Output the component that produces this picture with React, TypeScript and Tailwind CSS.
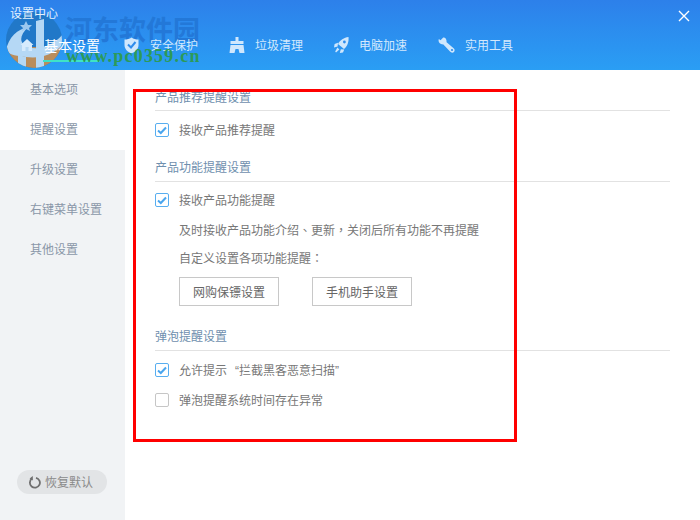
import React from "react";

const fontCls = "font-['Noto_Sans_CJK_SC','Noto_Sans',sans-serif]";
const twCls = "font-['Noto_Sans_CJK_TC',sans-serif]";
const latinCls = "font-['Liberation_Sans',sans-serif]";

const HomeIcon = () => (
  <svg width="14" height="14" viewBox="0 0 14 14" fill="#d6ebfd">
    <path d="M7 1 L13.5 7 L12 7 L12 13 L8.5 13 L8.5 9 L5.5 9 L5.5 13 L2 13 L2 7 L0.5 7 Z" />
  </svg>
);

const ShieldIcon = () => (
  <svg width="15" height="17" viewBox="0 0 15 17">
    <path d="M7.5 0.5 C9.5 2 12 2.6 14.5 2.6 L14.5 8 C14.5 12 11.5 15 7.5 16.5 C3.5 15 0.5 12 0.5 8 L0.5 2.6 C3 2.6 5.5 2 7.5 0.5 Z" fill="#cfe7fd" />
    <path d="M4 7.5 L7 10.5 L11.5 5" fill="none" stroke="#2f8cec" strokeWidth="2" />
  </svg>
);

const BroomIcon = () => (
  <svg width="16" height="16" viewBox="0 0 16 16" fill="#cfe7fd">
    <rect x="6.5" y="0" width="3" height="4" />
    <rect x="1.5" y="4" width="13" height="3" />
    <path d="M1.5 8 L14.5 8 L15.5 16 L10.5 16 L9.5 12 L6.5 12 L5.5 16 L0.5 16 Z" />
  </svg>
);

const RocketIcon = () => (
  <svg width="15" height="16" viewBox="0 0 15 16">
    <path d="M14.5 0 C15 5 13.2 9.5 10 12 L4 7 C6 3 10 0.5 14.5 0 Z" fill="#cfe7fd" />
    <path d="M4 5.8 L0.6 7 L0 10.4 L3.6 9.4 Z" fill="#cfe7fd" />
    <path d="M10.2 12.6 L9 15.4 L5.8 16 L6.8 12.2 Z" fill="#cfe7fd" />
    <path d="M3.4 10.6 L5.4 12.4 L2 15.4 L1.2 14.6 Z" fill="#cfe7fd" />
    <circle cx="10.4" cy="5" r="1.4" fill="#2f8cec" />
  </svg>
);

const WrenchIcon = () => (
  <svg width="17" height="16" viewBox="0 0 17 16">
    <path d="M5.2 0.6 L2.6 3.2 L0.8 2 C0 4.4 1 6.8 3.8 7.2 L5.4 7.4 L12 14.6 C13 15.8 14.8 16 16 15 C17 13.8 16.8 12.2 15.6 11.2 L8.6 5.2 C8.8 2.2 7.4 0.4 5.2 0.6 Z" fill="#cfe7fd" />
    <circle cx="14" cy="13" r="1.1" fill="#2f8cec" />
  </svg>
);

const navItems = [
  { label: "基本设置", icon: <HomeIcon />, cls: "w-[104px]", iconCls: "w-[24px]", textCls: "text-[14px] text-white", active: true },
  { label: "安全保护", icon: <ShieldIcon />, cls: "w-[105px]", iconCls: "w-[26px]", textCls: "text-[12px] text-[#d3e9fd]", active: false },
  { label: "垃圾清理", icon: <BroomIcon />, cls: "w-[105px]", iconCls: "w-[26px]", textCls: "text-[12px] text-[#d3e9fd]", active: false },
  { label: "电脑加速", icon: <RocketIcon />, cls: "w-[104px]", iconCls: "w-[25px]", textCls: "text-[12px] text-[#d3e9fd]", active: false },
  { label: "实用工具", icon: <WrenchIcon />, cls: "w-[105px]", iconCls: "w-[27px]", textCls: "text-[12px] text-[#d3e9fd]", active: false },
];

const sideItems = ["基本选项", "提醒设置", "升级设置", "右键菜单设置", "其他设置"];

const Check = ({ checked }: { checked: boolean }) => (
  <span
    className={
      checked
        ? "flex h-[14px] w-[14px] items-center justify-center rounded-[2px] border border-[#58aef0] bg-white"
        : "flex h-[14px] w-[14px] items-center justify-center rounded-[2px] border border-[#c6c6c6] bg-white"
    }
  >
    {checked && (
      <svg width="10" height="9" viewBox="0 0 10 9">
        <path d="M1 4.5 L3.8 7 L9 1.5" fill="none" stroke="#4aa5ee" strokeWidth="2" />
      </svg>
    )}
  </span>
);

const Row = ({ checked, children }: { checked: boolean; children: React.ReactNode }) => (
  <div className="flex h-[30px] items-center gap-[10px] text-[12px] text-[#777]">
    <Check checked={checked} />
    <span>{children}</span>
  </div>
);

const Heading = ({ text, cls }: { text: string; cls: string }) => (
  <div className={`flex h-[28px] w-[515px] items-center border-b border-[#e2e2e2] text-[12px] text-[#6f8fae] ${cls}`}>
    {text}
  </div>
);

const Watermark = () => (
  <div className="absolute left-[4px] top-[11px] flex">
    <svg width="60" height="58" viewBox="0 0 60 58">
      <defs>
        <clipPath id="logo">
          <circle cx="30" cy="29" r="28" />
        </clipPath>
      </defs>
      <g clipPath="url(#logo)">
        <rect width="60" height="58" fill="#2178c8" />
        <rect y="36" width="60" height="22" fill="#b98d5c" />
        <path d="M2 40 C4 26 14 18 24 16 C16 24 14 32 24 36 C36 40 50 34 60 22 L60 32 C50 44 36 48 22 46 C14 45 6 44 2 40 Z" fill="#b5d8f5" />
        <path d="M32 10 L40 8 L40 58 L32 58 Z" fill="#b5d8f5" />
        <path d="M14 44 L22 46 L22 58 L14 58 Z" fill="#b5d8f5" />
        <path d="M22 10 L24 14 L28 14 L25 17 L26 20 L22 18 L18 20 L19 17 L16 14 L20 14 Z" fill="#9cc8ef" />
      </g>
    </svg>
  </div>
);

export default function App() {
  return (
    <div className={`relative flex h-[520px] w-[700px] flex-col overflow-hidden bg-white ${fontCls}`}>
      <header className="relative h-[70px] bg-gradient-to-b from-[#2d80ea] to-[#2a9ef4]">
        <Watermark />
        <div className="absolute left-[65px] top-[14px] font-['Liberation_Serif','Noto_Sans_CJK_SC',serif] text-[27px] font-bold leading-[34px] text-[#2378d8]">
          河东软件园
        </div>
        <div className="relative flex h-[70px] flex-col">
          <div className="pl-[10px] pt-[6px] text-[12px] leading-[14px] text-[#e4f1fd]">设置中心</div>
          <nav className="mt-[15px] flex pl-[20px]">
            {navItems.map((n) => (
              <div key={n.label} className={`flex h-[20px] items-center ${n.cls}`}>
                <span className={`flex items-center ${n.iconCls}`}>{n.icon}</span>
                <span className={`relative leading-[20px] ${n.textCls}`}>
                  {n.label}
                  {n.active && <span className="absolute left-[-1px] top-[25px] h-[2px] w-[57px] bg-[#3fe3c6]" />}
                </span>
              </div>
            ))}
          </nav>
        </div>
        <div className="absolute left-[66px] top-[46px] font-['Liberation_Serif',serif] text-[18px] font-bold leading-[20px] tracking-[1.2px] text-[#2c9a58]">
          www.pc0359.cn
        </div>
        <svg className="absolute left-[678px] top-[10px]" width="12" height="12" viewBox="0 0 12 12">
          <path d="M1 1 L11 11 M11 1 L1 11" stroke="#fff" strokeWidth="1.4" />
        </svg>
      </header>

      <div className="flex flex-1">
        <aside className="flex w-[125px] flex-col bg-[#f1f3f5]">
          {sideItems.map((s) => (
            <div
              key={s}
              className={
                s === "提醒设置"
                  ? "flex h-[40px] items-center bg-white pb-[2px] pl-[30px] text-[12px] text-[#8a97a8]"
                  : "flex h-[40px] items-center pb-[2px] pl-[30px] text-[12px] text-[#8a97a8]"
              }
            >
              {s}
            </div>
          ))}
          <div className="mt-auto pb-[26px] pl-[17px]">
            <div className="flex h-[24px] w-[90px] items-center rounded-full bg-[#e2e4e6] pl-[11px] text-[12px] text-[#8a8a8a]">
              <svg width="13" height="13" viewBox="0 0 13 13" className="mr-[4px]">
                <path d="M4 2.6 A5 5 0 1 0 8 1.8" fill="none" stroke="#6f6f6f" strokeWidth="1.8" />
                <path d="M4.8 0 L4.8 4.4 L1.6 2.4 Z" fill="#6f6f6f" />
              </svg>
              恢复默认
            </div>
          </div>
        </aside>

        <main className="flex flex-col pl-[30px] pt-[13px]">
          <Heading text="产品推荐提醒设置" cls="" />
          <div className="mt-[4px]">
            <Row checked>接收产品推荐提醒</Row>
          </div>
          <Heading text="产品功能提醒设置" cls="mt-[9px] pb-[2px]" />
          <div className="mt-[3px]">
            <Row checked>接收产品功能提醒</Row>
          </div>
          <div className="pl-[24px] text-[12px] text-[#777]">
            <div className="flex h-[30px] items-center">
              <span>
                及时接收产品功能介绍<span className={twCls}>、</span>更新<span className={twCls}>，</span>关闭后所有功能不再提醒
              </span>
            </div>
            <div className="flex h-[26px] items-center">
              <span>
                自定义设置各项功能提醒<span className={twCls}>：</span>
              </span>
            </div>
            <div className="mt-[6px] flex gap-[33px]">
              <button className="h-[29px] w-[100px] border border-[#c8c8c8] bg-white text-[12px] text-[#666]">
                网购保镖设置
              </button>
              <button className="h-[29px] w-[100px] border border-[#c8c8c8] bg-white text-[12px] text-[#666]">
                手机助手设置
              </button>
            </div>
          </div>
          <Heading text="弹泡提醒设置" cls="mt-[17px] pb-[2px]" />
          <div className="mt-[4px]">
            <Row checked>
              允许提示
              <span className={`ml-[8px] ${latinCls}`}>“</span>
              拦截黑客恶意扫描
              <span className={latinCls}>”</span>
            </Row>
            <Row checked={false}>弹泡提醒系统时间存在异常</Row>
          </div>
        </main>
      </div>

      <div className="absolute left-[133px] top-[89px] h-[353px] w-[384px] border-[3px] border-[#f00]" />
    </div>
  );
}
